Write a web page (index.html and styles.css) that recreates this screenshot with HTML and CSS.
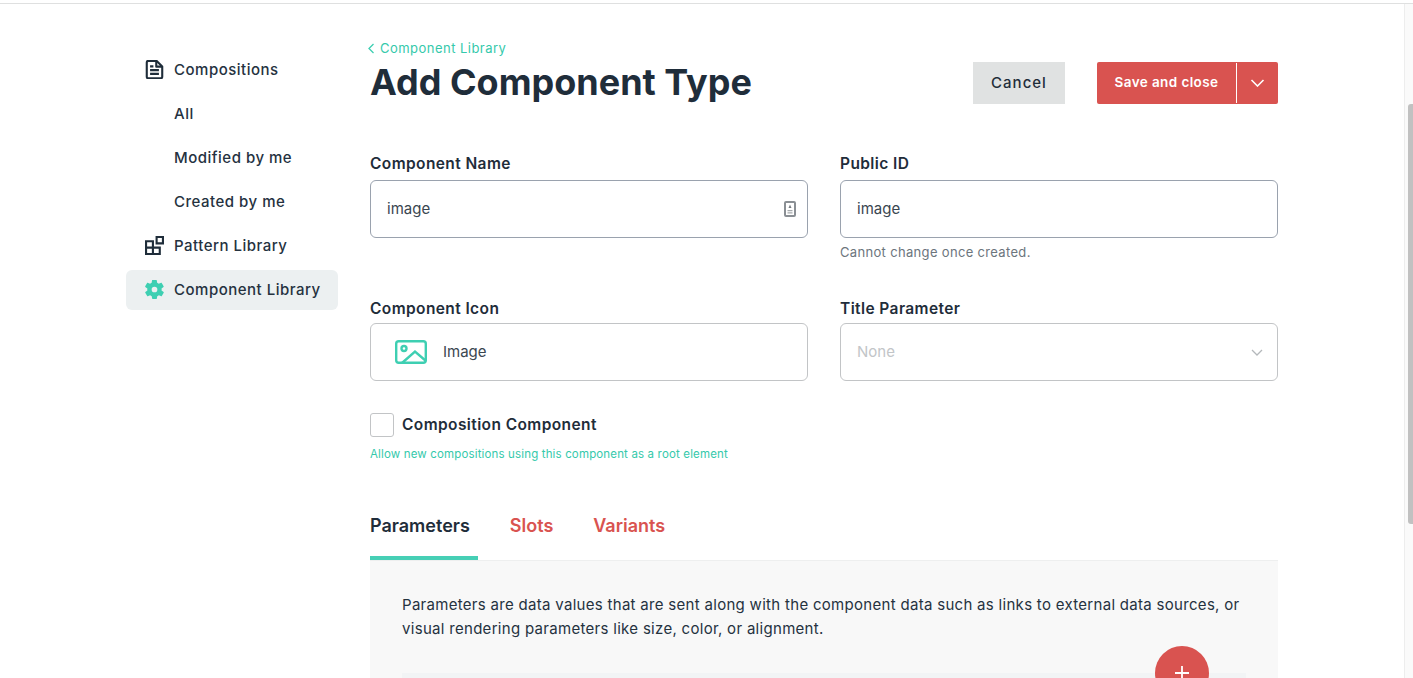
FILE: index.html
```html
<!DOCTYPE html>
<html lang="en">
<head>
<meta charset="utf-8">
<title>Add Component Type</title>
<link rel="stylesheet" href="styles.css">
</head>
<body>
<div class="app">
  <div class="page">
    <nav class="sidebar">
      <a class="nav-item">
        <svg class="nav-icon" viewBox="1 0.400 16 17.200" fill="none" stroke="#1f2d3a" stroke-width="1.900" stroke-linejoin="round"><path d="M2 2.600c0-.8.600-1.400 1.400-1.400h7.600l5 5v9.400c0 .8-.6 1.400-1.400 1.400H3.400c-.8 0-1.400-.6-1.400-1.400z"/><path d="M10.600 1.400v5h5.200M5 6.200h3M5 9.600h8M5 13h8"/></svg>
        <span>Compositions</span>
      </a>
      <a class="nav-item"><span class="nav-spacer"></span><span>All</span></a>
      <a class="nav-item"><span class="nav-spacer"></span><span>Modified by me</span></a>
      <a class="nav-item"><span class="nav-spacer"></span><span>Created by me</span></a>
      <a class="nav-item">
        <svg class="nav-icon" viewBox="0 0 18 18" fill="none" stroke="#1f2d3a" stroke-width="2"><path d="M1 5h6.500v12H1zM1 11h13v6H7.500"/><path d="M11 1h6v6h-6z"/></svg>
        <span>Pattern Library</span>
      </a>
      <a class="nav-item active">
        <svg class="nav-icon" viewBox="2 2 20 20" fill="#3ecfb2"><path d="M19.400 13c.1-.3.1-.7.1-1s0-.7-.1-1l2.100-1.600c.2-.2.3-.4.100-.7l-2-3.500c-.1-.2-.4-.3-.6-.2l-2.500 1c-.5-.4-1.100-.7-1.700-1l-.4-2.600c0-.2-.3-.4-.5-.4h-4c-.2 0-.5.200-.5.400l-.4 2.600c-.6.300-1.200.6-1.700 1l-2.500-1c-.2-.1-.5 0-.6.200l-2 3.500c-.1.300-.1.500.1.700L4.500 11c-.1.300-.1.700-.1 1s0 .7.100 1l-2.100 1.600c-.2.200-.3.400-.1.700l2 3.500c.1.200.4.300.6.200l2.500-1c.5.400 1.100.7 1.700 1l.4 2.600c0 .2.300.4.500.4h4c.2 0 .5-.2.500-.4l.4-2.600c.6-.3 1.200-.6 1.700-1l2.500 1c.2.100.5 0 .6-.2l2-3.500c.1-.3.1-.5-.1-.7zM12 15a3 3 0 1 1 0-6 3 3 0 0 1 0 6z"/></svg>
        <span>Component Library</span>
      </a>
    </nav>

    <main class="content">
      <header class="head">
        <div class="head-text">
          <a class="crumb"><svg class="crumb-icon" viewBox="0 0 7 11" fill="none" stroke="#3ecfb2" stroke-width="1.300"><path d="M5.500 1 1 5.500l4.500 4.500"/></svg>Component Library</a>
          <h1 class="title">Add Component Type</h1>
        </div>
        <div class="actions">
          <button class="btn-cancel">Cancel</button>
          <div class="btn-save">
            <span class="save-label">Save and close</span>
            <span class="save-caret"><svg class="caret-icon" viewBox="0 0 14 8" fill="none" stroke="#fff" stroke-width="1.600"><path d="M1 1l6 6 6-6"/></svg></span>
          </div>
        </div>
      </header>

      <section class="fields">
        <div class="field">
          <label class="label">Component Name</label>
          <div class="input strong">
            <span class="value">image</span>
            <svg class="key-icon" viewBox="0 0 12 16"><rect x="1" y="1" width="10" height="14" rx="1" fill="none" stroke="#8a8f94" stroke-width="2"/><path d="M6 3.500l1.500 3.500h-3z" fill="#777c81"/><path d="M3.500 9h5v1.200h-5zM3.500 11.200h5v1.200h-5z" fill="#a5a9ac"/></svg>
          </div>
        </div>
        <div class="field">
          <label class="label">Public ID</label>
          <div class="input strong"><span class="value">image</span></div>
          <p class="hint">Cannot change once created.</p>
        </div>
        <div class="field second">
          <label class="label">Component Icon</label>
          <div class="input soft icon-input">
            <svg class="image-icon" viewBox="0 0 32 24" fill="none" stroke="#3ecfb2" stroke-width="2.400"><rect x="1.200" y="1.200" width="29.600" height="21.600" rx="2.500"/><circle cx="9" cy="8.500" r="2.500"/><path d="M7 23l13-11.500L31 21"/></svg>
            <span class="value">Image</span>
          </div>
        </div>
        <div class="field second">
          <label class="label">Title Parameter</label>
          <div class="input soft">
            <span class="value muted">None</span>
            <svg class="select-caret" viewBox="0 0 12 7" fill="none" stroke="#b4b8bb" stroke-width="1.300"><path d="M1 1l5 5 5-5"/></svg>
          </div>
        </div>
      </section>

      <div class="check-row">
        <span class="checkbox"></span>
        <span class="check-label">Composition Component</span>
      </div>
      <p class="check-hint">Allow new compositions using this component as a root element</p>

      <div class="tabs">
        <a class="tab current">Parameters</a>
        <a class="tab">Slots</a>
        <a class="tab">Variants</a>
      </div>

      <section class="panel">
        <p class="panel-text">Parameters are data values that are sent along with the component data such as links to external data sources, or visual rendering parameters like size, color, or alignment.</p>
        <div class="inner-card"></div>
        <button class="fab"><svg class="fab-icon" viewBox="0 0 14 14" stroke="#fff" stroke-width="1.800"><path d="M7 0v14M0 7h14"/></svg></button>
      </section>
    </main>
  </div>
  <div class="scrollbar"><div class="thumb"></div></div>
</div>
</body>
</html>
```

FILE: styles.css
```css
* { box-sizing: border-box; }
html, body { margin: 0; height: 100%; overflow: hidden; background: #fff; }
body {
  font-family: Inter, "Liberation Sans", sans-serif;
  color: #1f2d3a;
  font-size: 15px;
}
p, h1 { margin: 0; }

.app {
  display: flex;
  height: 678px;
  margin-top: 3px;
  border-top: 1px solid #dfe0e0;
}
.page {
  flex: 1;
  display: flex;
  padding-left: 126px;
  overflow: hidden;
}

.sidebar {
  width: 212px;
  flex: none;
  padding-top: 46px;
  display: flex;
  flex-direction: column;
  gap: 4px;
}
.nav-item {
  height: 40px;
  display: flex;
  align-items: center;
  gap: 10px;
  padding-left: 19px;
  padding-bottom: 1px;
  border-radius: 6px;
  font-size: 15px;
  font-weight: 500;
  letter-spacing: 0.5px;
  color: #25323f;
}
.nav-item.active { background: #ecf0f1; }
.nav-icon { width: 19px; height: 19px; flex: none; }
.nav-spacer { width: 19px; flex: none; }

.content {
  width: 908px;
  flex: none;
  margin-left: 32px;
}

.head {
  display: flex;
  justify-content: space-between;
  padding-top: 36px;
}
.crumb {
  display: flex;
  align-items: center;
  gap: 5px;
  height: 16px;
  margin-left: -2px;
  font-size: 13px;
  letter-spacing: 0.47px;
  color: #35c9ab;
}
.crumb-icon { width: 7px; height: 11px; }
.title {
  margin-top: 5px;
  font-size: 36px;
  line-height: 42px;
  font-weight: 700;
  color: #1f2d3a;
}
.actions {
  display: flex;
  gap: 32px;
  margin-top: 22px;
  height: 42px;
}
.btn-cancel {
  width: 92px;
  height: 42px;
  border: 0;
  background: #e0e2e2;
  font: 500 15px Inter, "Liberation Sans", sans-serif;
  letter-spacing: 1px;
  color: #1f2d3a;
  padding: 0 0 2px;
}
.btn-save {
  width: 181px;
  height: 42px;
  display: flex;
  align-items: center;
  background: #d95350;
  border-radius: 2px;
  color: #fff;
  font-size: 13.500px;
  font-weight: 600;
  letter-spacing: 0.4px;
}
.save-label { width: 139px; text-align: center; flex: none; padding-bottom: 2px; }
.save-caret {
  flex: 1;
  height: 40px;
  border-left: 1px solid #fff;
  display: flex;
  align-items: center;
  justify-content: center;
  padding-right: 1px;
}
.caret-icon { width: 15px; height: 8px; }

.fields {
  display: grid;
  grid-template-columns: 438px 438px;
  column-gap: 32px;
  margin-top: 51px;
}
.field { min-height: 108px; }
.field.second { min-height: 0; margin-top: 37px; }
.label {
  display: block;
  font-size: 15.500px;
  line-height: 18px;
  font-weight: 600;
  letter-spacing: 0.4px;
  color: #1f2d3a;
  margin-bottom: 7px;
}
.field.second .label { margin-bottom: 5px; }
.input {
  height: 58px;
  border-radius: 6px;
  display: flex;
  align-items: center;
  justify-content: space-between;
  padding: 0 16px;
  background: #fff;
}
.input.strong { border: 1px solid #9aa2ae; }
.input.soft { border: 1px solid #c2c4c6; }
.icon-input { justify-content: flex-start; gap: 16px; padding-left: 24px; }
.value { font-size: 15px; color: #3a4650; padding-bottom: 1px; }
.value.muted { color: #c2c5c8; }
.key-icon { width: 12px; height: 16px; margin-right: -5px; }
.image-icon { width: 32px; height: 24px; }
.select-caret { width: 12px; height: 7px; margin-right: -2px; }
.hint { font-size: 13px; line-height: 16px; letter-spacing: 0.33px; color: #6c757d; margin-top: 6px; }

.check-row {
  display: flex;
  align-items: center;
  gap: 8px;
  margin-top: 32px;
}
.checkbox {
  width: 24px;
  height: 24px;
  border: 1px solid #c2c4c6;
  border-radius: 3px;
}
.check-label { font-size: 15.500px; font-weight: 600; letter-spacing: 0.4px; padding-bottom: 1px; }
.check-hint { font-size: 11.500px; line-height: 14px; letter-spacing: 0.15px; color: #35c9ab; margin-top: 10px; }

.tabs {
  display: flex;
  gap: 32px;
  margin-top: 48px;
  height: 51px;
}
.tab {
  font-size: 18px;
  font-weight: 600;
  line-height: 20px;
  color: #d95350;
  padding-top: 7px;
  padding-right: 8px;
}
.tab.current {
  color: #1f2d3a;
  border-bottom: 4px solid #46cfb5;
}

.panel {
  position: relative;
  height: 200px;
  background: #f8f8f8;
  border-top: 1px solid #eeefef;
  padding: 32px 32px 0;
}
.panel-text { font-size: 15px; line-height: 24px; letter-spacing: 0.3px; color: #25323f; }
.inner-card { height: 60px; margin-top: 32px; background: #f2f4f5; }
.fab {
  position: absolute;
  left: 785px;
  top: 85px;
  width: 54px;
  height: 54px;
  border: 0;
  border-radius: 50%;
  padding: 0;
  background: #d95350;
  display: flex;
  align-items: center;
  justify-content: center;
}
.fab-icon { width: 14px; height: 14px; }

.scrollbar {
  width: 9px;
  flex: none;
  border-left: 1px solid #ededed;
  background: #fafafa;
  padding: 100px 0 0 3px;
}
.thumb { height: 420px; background: #c1c1c1; border-radius: 3px 0 0 3px; }
```
